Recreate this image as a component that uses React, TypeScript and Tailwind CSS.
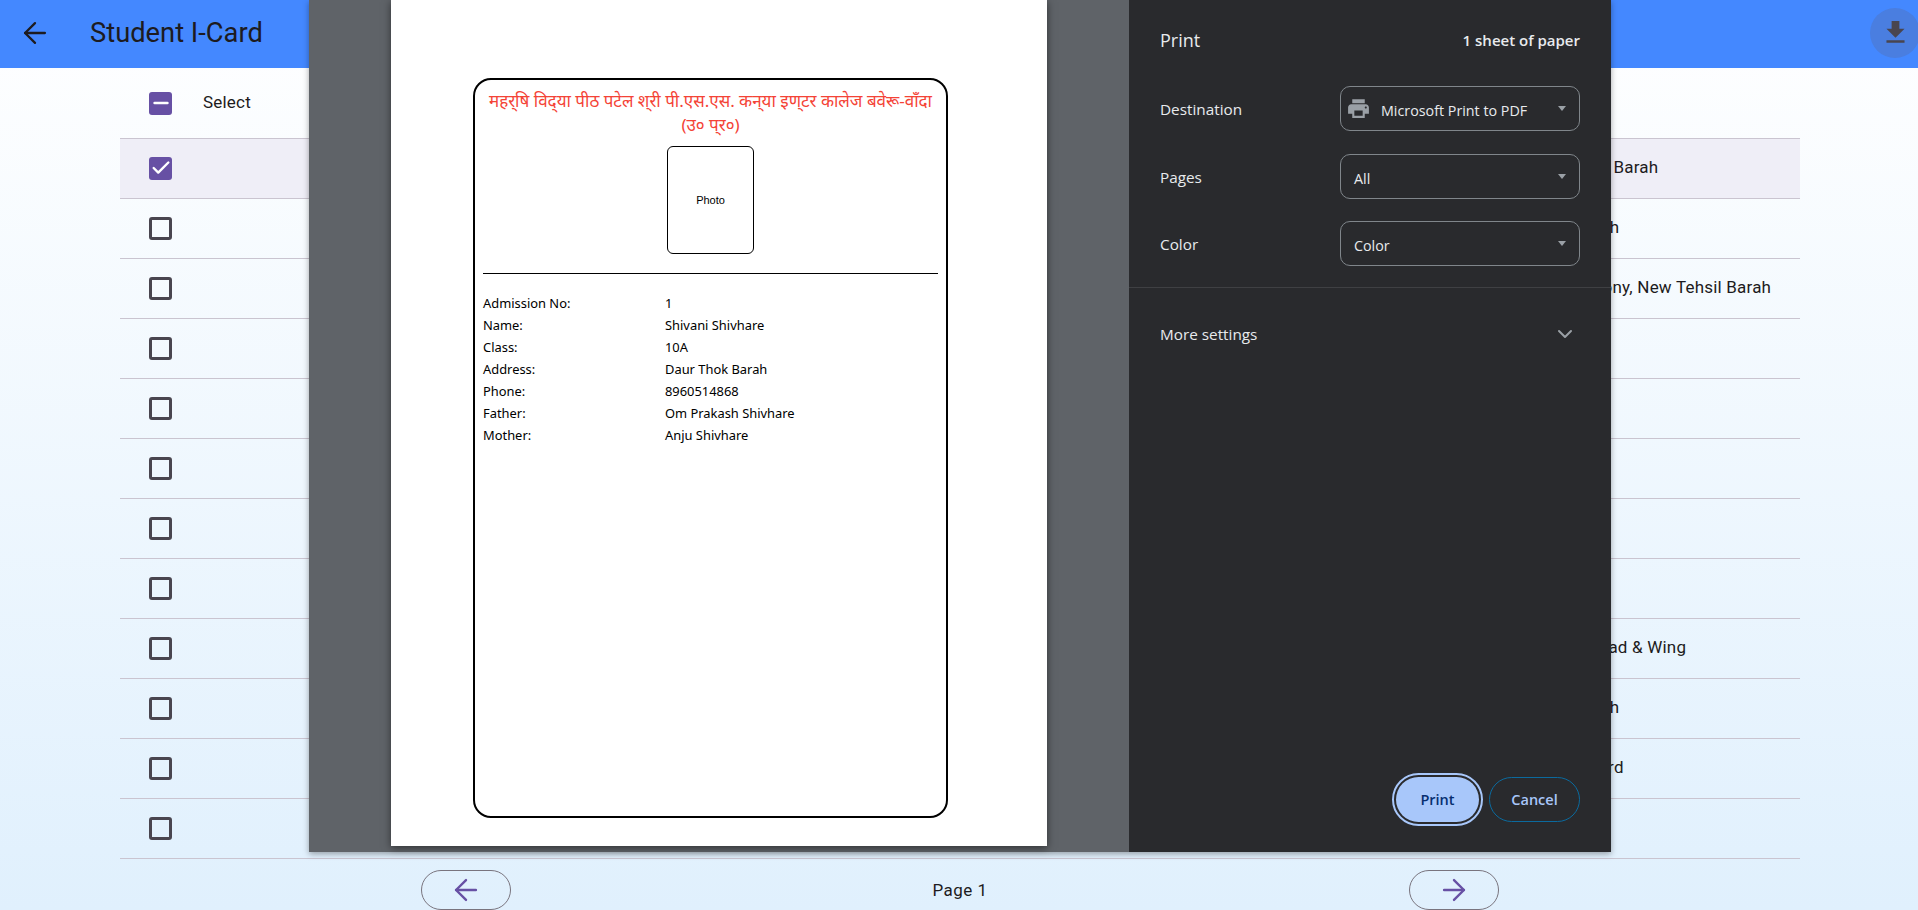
import { ArrowLeft, ArrowRight, Check, ChevronDown, Minus } from 'lucide-react';

// text of the address column, most of it sits behind the print dialog
const rows = [
  'Daur Thok Barah',
  'Ward Barah',
  'Lohia Colony, New Tehsil Barah',
  '',
  '',
  '',
  '',
  '',
  'Bandia Road & Wing',
  'Ward Barah',
  'Barahi Ward',
  '',
];

const details = [
  ['Admission No:', '1'],
  ['Name:', 'Shivani Shivhare'],
  ['Class:', '10A'],
  ['Address:', 'Daur Thok Barah'],
  ['Phone:', '8960514868'],
  ['Father:', 'Om Prakash Shivhare'],
  ['Mother:', 'Anju Shivhare'],
];

function Field({ label, top, children }: { label: string; top: string; children: React.ReactNode }) {
  return (
    <div className={`flex items-center justify-between ${top}`}>
      <span className="pt-[2px] text-[15.3px] text-[#e8eaed]">{label}</span>
      <div className="relative flex h-[45px] w-[240px] items-center rounded-[10px] border border-[#80868b] px-[13px] text-[14.3px] text-[#e8eaed]">
        {children}
        <span className="absolute right-[13px] top-[19px] h-0 w-0 border-x-[4.5px] border-t-[5px] border-x-transparent border-t-[#9aa0a6]" />
      </div>
    </div>
  );
}

export default function App() {
  return (
    <div className="relative h-[910px] w-full overflow-hidden bg-gradient-to-b from-white to-[#e0f0fd] font-['Roboto',sans-serif]">
      <header className="flex h-[68px] items-center justify-between bg-[#4488ff] pb-[3px] text-[#1d1b20]">
        <div className="flex items-center">
          <ArrowLeft size={34} strokeWidth={1.6} className="ml-[18px]" />
          <h1 className="ml-[38px] pt-[2px] text-[27.3px]">Student I-Card</h1>
        </div>
        <div className="mr-[-2px] flex h-[50px] w-[50px] items-center justify-center rounded-full bg-[#4a7ee0]">
          <svg width="31" height="31" viewBox="0 0 24 24" className="fill-[#49454f]">
            <path d="M19 9h-4V3H9v6H5l7 7 7-7zM5 18v2h14v-2H5z" />
          </svg>
        </div>
      </header>

      <main className="ml-[120px] w-[1680px]">
        <div className="flex h-[71px] items-center border-b border-[#cac4d0]">
          <span className="ml-[29px] flex h-[23px] w-[23px] items-center justify-center rounded-[3px] bg-[#6750a4]">
            <Minus size={22} strokeWidth={2.8} className="text-white" />
          </span>
          <span className="ml-[31px] text-[17px] tracking-[0.2px] text-[#1d1b20]">Select</span>
        </div>
        {rows.map((address, i) => (
          <div key={i} className={`flex h-[60px] items-center border-b border-[#cac4d0] pb-px ${i === 0 ? 'bg-[#efeef7]' : ''}`}>
            {i === 0 ? (
              <span className="ml-[29px] flex h-[23px] w-[23px] items-center justify-center rounded-[3px] bg-[#6750a4]">
                <Check size={22} strokeWidth={2.6} className="text-white" />
              </span>
            ) : (
              <span className="ml-[29px] h-[23px] w-[23px] rounded-[3px] border-[3px] border-[#49454f]" />
            )}
            <span className="ml-[1358px] whitespace-nowrap text-[17px] tracking-[0.2px] text-[#1d1b20]">{address}</span>
          </div>
        ))}
        <div className="flex items-center justify-between pl-[301px] pr-[301px] pt-[11px]">
          <button className="flex h-[40px] w-[90px] items-center justify-center rounded-[20px] border border-[#79747e]">
            <ArrowLeft size={34} strokeWidth={1.7} className="text-[#6750a4]" />
          </button>
          <span className="pt-px text-[17px] tracking-[0.5px] text-[#1d1b20]">Page 1</span>
          <button className="flex h-[40px] w-[90px] items-center justify-center rounded-[20px] border border-[#79747e]">
            <ArrowRight size={34} strokeWidth={1.7} className="text-[#6750a4]" />
          </button>
        </div>
      </main>

      {/* print dialog */}
      <div className="absolute left-[309px] top-0 flex h-[852px] w-[1302px] shadow-[0_2px_6px_rgba(0,0,0,0.35)]">
        <div className="flex w-[820px] justify-center bg-[#5f6368]">
          <div className="h-[846px] w-[656px] bg-white pt-[78px] shadow-[0_2px_8px_rgba(0,0,0,0.5)]">
            <div className="ml-[82px] h-[740px] w-[475px] rounded-[18px] border-2 border-black px-[8px]">
              <p className="mt-[9px] whitespace-nowrap text-center font-['Noto_Sans',sans-serif] text-[17px] leading-[24px] text-[#f44336]">
                महर्‌षि विद्‌या पीठ पटेल श्‌री पी.एस.एस. कन्‌या इण्‌टर कालेज बवेरू-वाँदा
                <br />
                (उ० प्‌र०)
              </p>
              <div className="mx-auto mt-[9px] flex h-[108px] w-[87px] items-center justify-center rounded-[6px] border border-black font-['Liberation_Sans',sans-serif] text-[11px] text-black">
                Photo
              </div>
              <div className="mt-[19px] border-t border-black" />
              <div className="mt-[18px] font-['Noto_Sans',sans-serif] text-[12.9px] leading-[22px] text-black">
                {details.map(([k, v]) => (
                  <div key={k} className="flex">
                    <span className="w-[182px]">{k}</span>
                    <span>{v}</span>
                  </div>
                ))}
              </div>
            </div>
          </div>
        </div>

        <aside className="relative w-[482px] bg-[#292a2d] font-['Open_Sans',sans-serif]">
          <div className="flex items-center justify-between pl-[31px] pr-[31px] pt-[28px] leading-[24px]">
            <span className="text-[18px] text-[#e8eaed]">Print</span>
            <span className="text-[15px] font-semibold text-[#e8eaed]">1 sheet of paper</span>
          </div>
          <div className="pl-[31px] pr-[31px]">
            <Field label="Destination" top="mt-[34px]">
              <svg width="25" height="25" viewBox="0 0 24 24" className="ml-[-8px] mr-[10px] shrink-0 fill-[#9aa0a6]">
                <path d="M19 8H5c-1.66 0-3 1.34-3 3v6h4v4h12v-4h4v-6c0-1.66-1.34-3-3-3zm-3 11H8v-5h8v5zm3-7c-.55 0-1-.45-1-1s.45-1 1-1 1 .45 1 1-.45 1-1 1zm-1-9H6v4h12V3z" />
              </svg>
              <span className="pt-[4px]">Microsoft Print to PDF</span>
            </Field>
            <Field label="Pages" top="mt-[23px]"><span className="pt-[4px]">All</span></Field>
            <Field label="Color" top="mt-[22px]"><span className="pt-[4px]">Color</span></Field>
          </div>
          <div className="mt-[21px] border-t border-[#3f4043]" />
          <div className="flex items-center justify-between pl-[31px] pr-[34px] pt-[34px] text-[15.3px] leading-[24px] text-[#e8eaed]">
            More settings
            <ChevronDown size={24} className="text-[#9aa0a6]" />
          </div>
          <div className="absolute bottom-[26px] right-[31px] flex items-center gap-[6px]">
            <span className="rounded-full border-[2px] border-[#a8c7fa] p-[2px]">
              <button className="flex h-[45px] w-[83px] items-center justify-center rounded-full bg-[#a8c7fa] text-[14.5px] font-semibold text-[#062e6f]">
                Print
              </button>
            </span>
            <button className="flex h-[45px] w-[91px] items-center justify-center rounded-full border border-[#0b6a9e] text-[14.5px] font-semibold text-[#a8c7fa]">
              Cancel
            </button>
          </div>
        </aside>
      </div>
    </div>
  );
}
